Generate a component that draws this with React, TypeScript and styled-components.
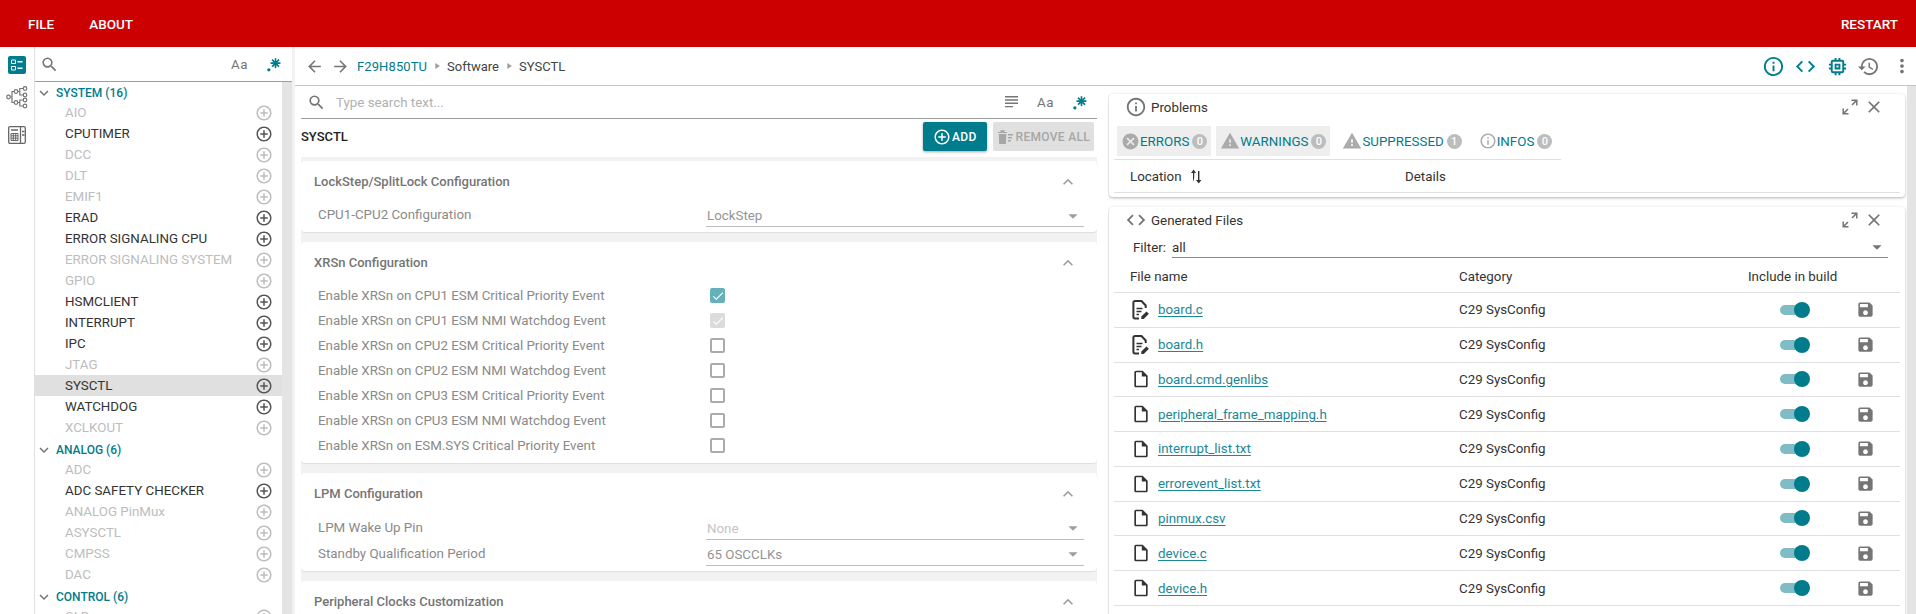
import React from 'react'
import styled, { createGlobalStyle } from 'styled-components'
import {
  MdAddCircleOutline, MdArrowBack, MdArrowForward, MdCancel, MdClose, MdCode, MdExpandLess, MdExpandMore,
  MdHistory, MdInfoOutline, MdMemory, MdMoreVert, MdOutlineInsertDriveFile, MdSave, MdSearch, MdWarning,
  MdArrowDropDown, MdCheck, MdPlayArrow,
} from 'react-icons/md'

const TEAL = '#007c8c'

const GlobalStyle = createGlobalStyle`
  html, body { margin: 0; height: 100%; overflow: hidden; background: #fff; }
  body { font-family: Roboto, "Liberation Sans", sans-serif; font-size: 13.33px; color: #333; }
  * { box-sizing: border-box; }
`

const RegexIcon: React.FC<{ size?: number }> = ({ size = 20 }) =>
  <svg width={size} height={size} viewBox="0 0 24 24" fill={TEAL}>
    <path d="M16 16.92C15.67 16.97 15.34 17 15 17C14.66 17 14.33 16.97 14 16.92V13.41L11.5 15.89C11 15.5 10.5 15 10.11 14.5L12.59 12H9.08C9.03 11.67 9 11.34 9 11C9 10.66 9.03 10.33 9.08 10H12.59L10.11 7.5C10.3 7.25 10.5 7 10.76 6.76C11 6.5 11.25 6.3 11.5 6.11L14 8.59V5.08C14.33 5.03 14.66 5 15 5C15.34 5 15.67 5.03 16 5.08V8.59L18.5 6.11C19 6.5 19.5 7 19.89 7.5L17.41 10H20.92C20.97 10.33 21 10.66 21 11C21 11.34 20.97 11.67 20.92 12H17.41L19.89 14.5C19.7 14.75 19.5 15 19.24 15.24C19 15.5 18.75 15.7 18.5 15.89L16 13.41V16.92M5 19A2 2 0 0 1 7 17A2 2 0 0 1 9 19A2 2 0 0 1 7 21A2 2 0 0 1 5 19Z" />
  </svg>

const ConfigIcon = () =>
  <svg width="18" height="18" viewBox="0 0 18 18">
    <rect width="18" height="18" rx="2" fill={TEAL} />
    <path d="M3.5 4h4v3.5h-4zM3.5 10.5h4V14h-4z" fill="none" stroke="#fff" />
    <path d="M9.5 5.7h5M9.5 12.2h5" stroke="#fff" strokeWidth="1.6" />
  </svg>

const NetworkIcon = () =>
  <svg width="22" height="23" viewBox="0 0 22 23" fill="none" stroke="#757575" strokeWidth="1.2">
    <circle cx="2.5" cy="11" r="1.8" />
    <circle cx="10" cy="5.5" r="1.8" />
    <circle cx="10" cy="16.5" r="1.8" />
    <circle cx="19" cy="2.5" r="1.8" />
    <circle cx="19" cy="9" r="1.8" />
    <circle cx="19" cy="14" r="1.8" />
    <circle cx="19" cy="20" r="1.8" />
    <path d="M4.3 11h1.7V5.5h2.2M6 11v5.5h2.2M11.8 5.5h2V2.5h3.4M13.8 5.5V9h3.4M11.8 16.5h2V14h3.4M13.8 16.5V20h3.4" />
  </svg>

const CalculatorIcon = () =>
  <svg width="18" height="18" viewBox="0 0 18 18" fill="none" stroke="#666" strokeWidth="1.3">
    <rect x="0.7" y="0.7" width="16.6" height="16.6" rx="1.2" />
    <path d="M12.5 1v16M3 4h7" />
    <path d="M3 7.5h7v7H3zM5.3 7.5v7M7.7 7.5v7M3 9.8h7M3 12.2h7" strokeWidth="1" />
    <path d="M14 5.5h2.5M14 9h2.5" />
  </svg>

const LinesIcon = () =>
  <svg width="14" height="12" viewBox="0 0 14 12" fill="#757575">
    <path d="M0 0h13v1.4H0zM0 3.3h13v1.4H0zM0 6.6h13V8H0zM0 9.9h8v1.4H0z" />
  </svg>

const TrashIcon = () =>
  <svg width="17" height="17" viewBox="0 0 17 17" fill="#a6a6a6">
    <path d="M1 4h9v1H1zM3.5 2.2h4V4h-4zM1.8 6h7.5l-.4 10H2.2z" />
    <path d="M11 6h5v1.4h-5zM11 9h4v1.4h-4zM11 12h3v1.4h-3z" />
  </svg>

const SortIcon = () =>
  <svg width="13" height="15" viewBox="0 0 13 15" fill="#333">
    <path d="M3 13V4H1l2.7-3.5L6 4H4.2v5z" />
    <path d="M8 2h1.4v9h2l-2.7 3.5L6 11h2z" />
  </svg>

const EditedFileIcon = () =>
  <svg width="18" height="20" viewBox="0 0 18 20" fill="none" stroke="#333" strokeWidth="2">
    <path d="M7 18.4H3a1.6 1.6 0 0 1-1.6-1.6V2.6A1.6 1.6 0 0 1 3 1h6.5l4.2 4.5v2.5" />
    <path d="M4.5 8.5h6M4.5 11.5h5M4.5 14.5h2.5" strokeWidth="1.6" />
    <path d="M9.3 19v-2.4l5.2-5.2 2.4 2.4-5.2 5.2z" fill="#333" stroke="none" />
  </svg>

const ExpandIcon = () =>
  <svg width="16" height="16" viewBox="0 0 16 16" fill="none" stroke="#757575" strokeWidth="1.5">
    <path d="M9.5 1.2h5.3v5.3M14.6 1.4L10 6M1.2 9.5v5.3h5.3M1.4 14.6L6 10" />
  </svg>

const Page = styled.div`
  display: flex;
  flex-direction: column;
  height: 100vh;
  overflow: hidden;
`

const TopBar = styled.header`
  display: flex;
  align-items: center;
  flex: 0 0 47px;
  padding: 0 18px 0 28px;
  background: #cc0000;
`

const TopItem = styled.span`
  margin-right: 35px;
  color: #fff;
  font-size: 13.5px;
  font-weight: 500;
  &:last-child { margin: 0 0 0 auto; }
`

const Body = styled.div`
  display: flex;
  flex: 1;
  min-height: 0;
`

const Rail = styled.nav`
  display: flex;
  flex: 0 0 35px;
  flex-direction: column;
  align-items: center;
  padding-top: 9px;
  border-right: 1px solid #e0e0e0;
`

const RailSlot = styled.div`
  display: flex;
  justify-content: center;
  align-items: center;
  height: 18px;
  margin-bottom: ${ ({ $gap }: { $gap: number }) => $gap }px;
`

const TreePane = styled.aside`
  display: flex;
  flex: 0 0 257px;
  flex-direction: column;
`

const TreeSearch = styled.div`
  display: flex;
  align-items: center;
  flex: 0 0 35px;
  padding: 0 9px 0 5px;
  border-bottom: 1px solid #9e9e9e;
  color: #757575;
`

const Spacer = styled.div`
  flex: 1;
`

const AaLabel = styled.span<{ $gap: number, $lead?: number }>`
  margin: 0 ${ ({ $gap }) => $gap }px 0 ${ ({ $lead }) => $lead ?? 0 }px;
  color: #757575;
  font-size: 13.33px;
  letter-spacing: 0.5px;
`

const TreeScroller = styled.div`
  display: grid;
  flex: 1;
  grid-template-columns: 1fr 10px;
  min-height: 0;
  overflow: hidden;
`

const TreeList = styled.div`
  margin-top: -1px;
  overflow: hidden;
`

const ScrollStrip = styled.div`
  background: #e4e4e4;
`

const GroupRow = styled.div`
  display: flex;
  align-items: center;
  height: 21px;
  padding-top: 2px;
  color: ${ TEAL };
  font-size: 12px;
  font-weight: 500;
  svg { margin-right: 3px; color: #757575; }
`

const TreeRow = styled.div<{ $on?: boolean, $selected?: boolean }>`
  display: flex;
  align-items: center;
  justify-content: space-between;
  height: 21px;
  padding: 0 9px 0 30px;
  background: ${ ({ $selected }) => $selected ? '#e0e0e0' : 'transparent' };
  color: ${ ({ $on }) => $on ? '#333' : '#bdbdbd' };
  svg { color: ${ ({ $on }) => $on ? '#555' : '#bdbdbd' }; }
`

const PaneGutter = styled.div`
  flex: 0 0 3px;
  background: #f2f2f2;
`

const Workspace = styled.main`
  display: flex;
  flex: 1;
  flex-direction: column;
  min-width: 0;
`

const CrumbBar = styled.div`
  display: flex;
  align-items: center;
  flex: 0 0 39px;
  padding: 0 3px 0 10px;
  border-bottom: 1px solid #c4c4c4;
  color: #444;
  font-size: 13px;
`

const NavButton = styled.span`
  display: flex;
  margin-right: ${ ({ $gap }: { $gap: number }) => $gap }px;
  color: #757575;
`

const CrumbLink = styled.span`
  color: ${ TEAL };
  letter-spacing: 0.1px;
`

const CrumbSep = styled.span`
  display: flex;
  margin: 0 5px;
  color: #9e9e9e;
`

const ToolIcon = styled.span<{ $gap: number, $teal?: boolean }>`
  display: flex;
  margin-left: ${ ({ $gap }) => $gap }px;
  color: ${ ({ $teal }) => $teal ? TEAL : '#757575' };
`

const Panes = styled.div`
  display: flex;
  flex: 1;
  min-height: 0;
`

const Middle = styled.section`
  display: flex;
  flex: 0 0 813px;
  flex-direction: column;
  padding: 0 11px 0 6px;
  overflow: hidden;
`

const SearchBar = styled.div`
  display: flex;
  align-items: center;
  flex: 0 0 33px;
  padding: 0 8px 0 6px;
  border-bottom: 1px solid #9e9e9e;
  color: #757575;
`

const Placeholder = styled.span`
  margin-left: 10px;
  color: #b0b0b0;
`

const HeadingRow = styled.div`
  display: flex;
  align-items: flex-start;
  flex: 0 0 38px;
  padding: 3px 3px 0 0;
`

const Heading = styled.h2`
  margin: 7px auto 0 0;
  color: #222;
  font-size: 13px;
  font-weight: 500;
`

const ActionButton = styled.button<{ $primary?: boolean }>`
  display: flex;
  align-items: center;
  gap: ${ ({ $primary }) => $primary ? 1 : 2 }px;
  height: 29px;
  margin-left: 6px;
  padding: 0 ${ ({ $primary }) => $primary ? '10px' : '4px' };
  border: 0;
  border-radius: 2px;
  background: ${ ({ $primary }) => $primary ? TEAL : '#e0e0e0' };
  box-shadow: ${ ({ $primary }) => $primary ? '0 1px 3px rgba(0,0,0,.35)' : 'none' };
  color: ${ ({ $primary }) => $primary ? '#fff' : '#a6a6a6' };
  font-family: inherit;
  font-size: 12px;
  font-weight: 500;
  letter-spacing: 0.3px;
`

const CardStack = styled.div`
  display: flex;
  flex: 1;
  flex-direction: column;
  gap: 10px;
  padding-top: 4px;
  background: #f2f2f2;
`

const Card = styled.article`
  flex: none;
  padding-bottom: 5px;
  border-radius: 4px;
  background: #fff;
  box-shadow: 0 1px 1px rgba(0,0,0,.08);
`

const CardTitle = styled.div`
  display: flex;
  align-items: center;
  justify-content: space-between;
  height: 41px;
  padding: 0 19px 0 13px;
  color: #757575;
  font-size: 13px;
  font-weight: 500;
  svg { color: #9e9e9e; }
`

const FieldRow = styled.div<{ $tall?: boolean }>`
  display: grid;
  grid-template-columns: 388px 1fr;
  align-items: center;
  height: ${ ({ $tall }) => $tall ? 26 : 25 }px;
  padding: 0 13px 0 17px;
  color: #8a8a8a;
`

const Select = styled.div<{ $faint?: boolean }>`
  display: flex;
  align-items: center;
  justify-content: space-between;
  height: 22px;
  margin-top: 3px;
  padding-left: 1px;
  border-bottom: 1px solid #bdbdbd;
  color: ${ ({ $faint }) => $faint ? '#c4c4c4' : '#949494' };
  svg { color: #9e9e9e; }
`

const CheckBox = styled.span<{ $state: 'on' | 'locked' | 'off' }>`
  display: flex;
  justify-content: center;
  align-items: center;
  width: 15px;
  height: 15px;
  margin-left: 4px;
  border-radius: 2px;
  border: ${ ({ $state }) => $state === 'off' ? '2px solid #ababab' : 'none' };
  background: ${ ({ $state }) => $state === 'on' ? '#66b0ba' : $state === 'locked' ? '#dcdcdc' : '#fff' };
  color: #fff;
`

const Right = styled.section`
  display: grid;
  flex: 1;
  grid-template-columns: 1fr 9px;
  min-width: 0;
`

const RightColumn = styled.div`
  display: flex;
  flex-direction: column;
  gap: 10px;
  padding: 8px 2px 0 1px;
  overflow: hidden;
`

const PanelCard = styled.div<{ $height?: number }>`
  flex: ${ ({ $height }) => $height ? `0 0 ${ $height }px` : '1' };
  padding: 0 5px;
  border-radius: 4px;
  background: #fff;
  box-shadow: 0 1px 3px rgba(0,0,0,.3);
`

const PanelHead = styled.div`
  display: flex;
  align-items: center;
  height: 26px;
  padding: 0 16px 0 11px;
  color: #333;
  svg { color: #757575; }
`

const PanelTitle = styled.span`
  margin: 0 auto 0 4px;
`

const ExpandSlot = styled.span`
  display: flex;
  margin-right: 6px;
`

const TabStrip = styled.div`
  display: flex;
  gap: 5px;
  width: 447px;
  height: 40px;
  padding: 6px 0 0 3px;
  border-bottom: 1px solid #e0e0e0;
`

const Tab = styled.div<{ $active?: boolean, $gapRight?: number }>`
  display: flex;
  align-items: center;
  height: 30px;
  margin-right: ${ ({ $gapRight }) => $gapRight ?? 0 }px;
  padding: 0 4px;
  background: ${ ({ $active }) => $active ? '#eeeeee' : 'transparent' };
  color: ${ TEAL };
  svg { color: #ababab; }
`

const Badge = styled.span`
  display: flex;
  justify-content: center;
  align-items: center;
  width: 15px;
  height: 15px;
  margin-left: 3px;
  border-radius: 50%;
  background: #bdbdbd;
  color: #fff;
  font-size: 11px;
  font-weight: 500;
`

const ProblemHead = styled.div`
  display: grid;
  grid-template-columns: 275px 1fr;
  align-items: center;
  height: 33px;
  padding-left: 16px;
  border-bottom: 1px solid #e0e0e0;
`

const SortLabel = styled.span`
  display: flex;
  align-items: center;
  gap: 8px;
`

const FilterRow = styled.div`
  display: flex;
  align-items: flex-end;
  height: 25px;
  padding: 0 12px 0 19px;
`

const FilterLabel = styled.span`
  margin: 0 6px 3px 0;
`

const FilterInput = styled.div`
  display: flex;
  align-items: center;
  justify-content: space-between;
  flex: 1;
  height: 21px;
  border-bottom: 1px solid #8a8a8a;
  svg { color: #757575; }
`

const FileHead = styled.div`
  display: grid;
  grid-template-columns: 329px 289px 1fr;
  align-items: center;
  height: 35px;
  padding: 2px 0 0 16px;
  border-bottom: 1px solid #e0e0e0;
`

const FileRow = styled.div`
  display: grid;
  grid-template-columns: 328px 321px 76px 1fr;
  align-items: center;
  height: 34.78px;
  padding-left: 17px;
  border-bottom: 1px solid #e0e0e0;
`

const FileCell = styled.span`
  display: flex;
  align-items: center;
`

const IconSlot = styled.span`
  display: flex;
  justify-content: center;
  width: 20px;
  margin-right: 7px;
  color: #333;
`

const FileLink = styled.a`
  color: #1a8797;
  text-decoration: underline;
  text-underline-offset: 2px;
`

const Toggle = styled.span`
  position: relative;
  display: block;
  width: 26px;
  height: 10px;
  border-radius: 5px;
  background: #80bcc5;
  &::after {
    content: '';
    position: absolute;
    top: -3px;
    right: -4px;
    width: 16px;
    height: 16px;
    border-radius: 50%;
    background: ${ TEAL };
  }
`

const SaveSlot = styled.span`
  display: flex;
  color: #757575;
`

const GutterStrip = styled.div`
  background: #e4e4e4;
`

type TreeItem = [string, boolean?, boolean?]

const groups: { title: string, items: TreeItem[] }[] = [
  {
    title: 'SYSTEM (16)',
    items: [
      ['AIO'], ['CPUTIMER', true], ['DCC'], ['DLT'], ['EMIF1'], ['ERAD', true], ['ERROR SIGNALING CPU', true],
      ['ERROR SIGNALING SYSTEM'], ['GPIO'], ['HSMCLIENT', true], ['INTERRUPT', true], ['IPC', true], ['JTAG'],
      ['SYSCTL', true, true], ['WATCHDOG', true], ['XCLKOUT'],
    ],
  },
  {
    title: 'ANALOG (6)',
    items: [['ADC'], ['ADC SAFETY CHECKER', true], ['ANALOG PinMux'], ['ASYSCTL'], ['CMPSS'], ['DAC']],
  },
  { title: 'CONTROL (6)', items: [['CLB']] },
]

const xrsnRows: [string, 'on' | 'locked' | 'off'][] = [
  ['Enable XRSn on CPU1 ESM Critical Priority Event', 'on'],
  ['Enable XRSn on CPU1 ESM NMI Watchdog Event', 'locked'],
  ['Enable XRSn on CPU2 ESM Critical Priority Event', 'off'],
  ['Enable XRSn on CPU2 ESM NMI Watchdog Event', 'off'],
  ['Enable XRSn on CPU3 ESM Critical Priority Event', 'off'],
  ['Enable XRSn on CPU3 ESM NMI Watchdog Event', 'off'],
  ['Enable XRSn on ESM.SYS Critical Priority Event', 'off'],
]

const files: [string, boolean?][] = [
  ['board.c', true],
  ['board.h', true],
  ['board.cmd.genlibs'],
  ['peripheral_frame_mapping.h'],
  ['interrupt_list.txt'],
  ['errorevent_list.txt'],
  ['pinmux.csv'],
  ['device.c'],
  ['device.h'],
  ['device.cmd.genlibs'],
]

const Tree: React.FC = () =>
  <TreePane>
    <TreeSearch>
      <MdSearch size={19} />
      <Spacer />
      <AaLabel $gap={15}>Aa</AaLabel>
      <RegexIcon />
    </TreeSearch>
    <TreeScroller>
      <TreeList>
        {groups.map(group =>
          <React.Fragment key={group.title}>
            <GroupRow><MdExpandMore size={18} />{group.title}</GroupRow>
            {group.items.map(([name, on, selected]) =>
              <TreeRow key={name} $on={on} $selected={selected}>
                {name}
                <MdAddCircleOutline size={18} />
              </TreeRow>
            )}
          </React.Fragment>
        )}
      </TreeList>
      <ScrollStrip />
    </TreeScroller>
  </TreePane>

const ConfigPane: React.FC = () =>
  <Middle>
    <SearchBar>
      <MdSearch size={19} />
      <Placeholder>Type search text...</Placeholder>
      <Spacer />
      <LinesIcon />
      <AaLabel $gap={15} $lead={18}>Aa</AaLabel>
      <RegexIcon />
    </SearchBar>
    <HeadingRow>
      <Heading>SYSCTL</Heading>
      <ActionButton $primary><MdAddCircleOutline size={18} />ADD</ActionButton>
      <ActionButton><TrashIcon />REMOVE ALL</ActionButton>
    </HeadingRow>
    <CardStack>
      <Card>
        <CardTitle>LockStep/SplitLock Configuration<MdExpandLess size={20} /></CardTitle>
        <FieldRow>
          CPU1-CPU2 Configuration
          <Select>LockStep<MdArrowDropDown size={22} /></Select>
        </FieldRow>
      </Card>
      <Card>
        <CardTitle>XRSn Configuration<MdExpandLess size={20} /></CardTitle>
        {xrsnRows.map(([label, state]) =>
          <FieldRow key={label}>
            {label}
            <CheckBox $state={state}>{state !== 'off' && <MdCheck size={14} />}</CheckBox>
          </FieldRow>
        )}
      </Card>
      <Card>
        <CardTitle>LPM Configuration<MdExpandLess size={20} /></CardTitle>
        <FieldRow $tall>
          LPM Wake Up Pin
          <Select $faint>None<MdArrowDropDown size={22} /></Select>
        </FieldRow>
        <FieldRow $tall>
          Standby Qualification Period
          <Select>65 OSCCLKs<MdArrowDropDown size={22} /></Select>
        </FieldRow>
      </Card>
      <Card>
        <CardTitle>Peripheral Clocks Customization<MdExpandLess size={20} /></CardTitle>
      </Card>
    </CardStack>
  </Middle>

const PanelActions: React.FC = () =>
  <>
    <ExpandSlot><ExpandIcon /></ExpandSlot>
    <MdClose size={20} />
  </>

const SidePanels: React.FC = () =>
  <Right>
    <RightColumn>
      <PanelCard $height={103}>
        <PanelHead>
          <MdInfoOutline size={22} />
          <PanelTitle>Problems</PanelTitle>
          <PanelActions />
        </PanelHead>
        <TabStrip>
          <Tab $active><MdCancel size={19} />ERRORS<Badge>0</Badge></Tab>
          <Tab $active $gapRight={3}><MdWarning size={20} />WARNINGS<Badge>0</Badge></Tab>
          <Tab $gapRight={4}><MdWarning size={20} />SUPPRESSED<Badge>1</Badge></Tab>
          <Tab><MdInfoOutline size={18} />INFOS<Badge>0</Badge></Tab>
        </TabStrip>
        <ProblemHead>
          <SortLabel>Location <SortIcon /></SortLabel>
          Details
        </ProblemHead>
      </PanelCard>
      <PanelCard>
        <PanelHead>
          <MdCode size={22} />
          <PanelTitle>Generated Files</PanelTitle>
          <PanelActions />
        </PanelHead>
        <FilterRow>
          <FilterLabel>Filter:</FilterLabel>
          <FilterInput>all<MdArrowDropDown size={22} /></FilterInput>
        </FilterRow>
        <FileHead>
          File name
          <span>Category</span>
          <span>Include in build</span>
        </FileHead>
        {files.map(([name, edited]) =>
          <FileRow key={name}>
            <FileCell>
              <IconSlot>{edited ? <EditedFileIcon /> : <MdOutlineInsertDriveFile size={24} />}</IconSlot>
              <FileLink>{name}</FileLink>
            </FileCell>
            <span>C29 SysConfig</span>
            <Toggle />
            <SaveSlot><MdSave size={19} /></SaveSlot>
          </FileRow>
        )}
      </PanelCard>
    </RightColumn>
    <GutterStrip />
  </Right>

const App: React.FC = () =>
  <>
    <GlobalStyle />
    <Page>
      <TopBar>
        <TopItem>FILE</TopItem>
        <TopItem>ABOUT</TopItem>
        <TopItem>RESTART</TopItem>
      </TopBar>
      <Body>
        <Rail>
          <RailSlot $gap={14}><ConfigIcon /></RailSlot>
          <RailSlot $gap={20}><NetworkIcon /></RailSlot>
          <RailSlot $gap={0}><CalculatorIcon /></RailSlot>
        </Rail>
        <Tree />
        <PaneGutter />
        <Workspace>
          <CrumbBar>
            <NavButton $gap={7}><MdArrowBack size={19} /></NavButton>
            <NavButton $gap={7}><MdArrowForward size={19} /></NavButton>
            <CrumbLink>F29H850TU</CrumbLink>
            <CrumbSep><MdPlayArrow size={10} /></CrumbSep>
            Software
            <CrumbSep><MdPlayArrow size={10} /></CrumbSep>
            SYSCTL
            <Spacer />
            <ToolIcon $gap={0} $teal><MdInfoOutline size={23} /></ToolIcon>
            <ToolIcon $gap={9} $teal><MdCode size={23} /></ToolIcon>
            <ToolIcon $gap={9} $teal><MdMemory size={23} /></ToolIcon>
            <ToolIcon $gap={8}><MdHistory size={23} /></ToolIcon>
            <ToolIcon $gap={11}><MdMoreVert size={22} /></ToolIcon>
          </CrumbBar>
          <Panes>
            <ConfigPane />
            <SidePanels />
          </Panes>
        </Workspace>
      </Body>
    </Page>
  </>

export default App
